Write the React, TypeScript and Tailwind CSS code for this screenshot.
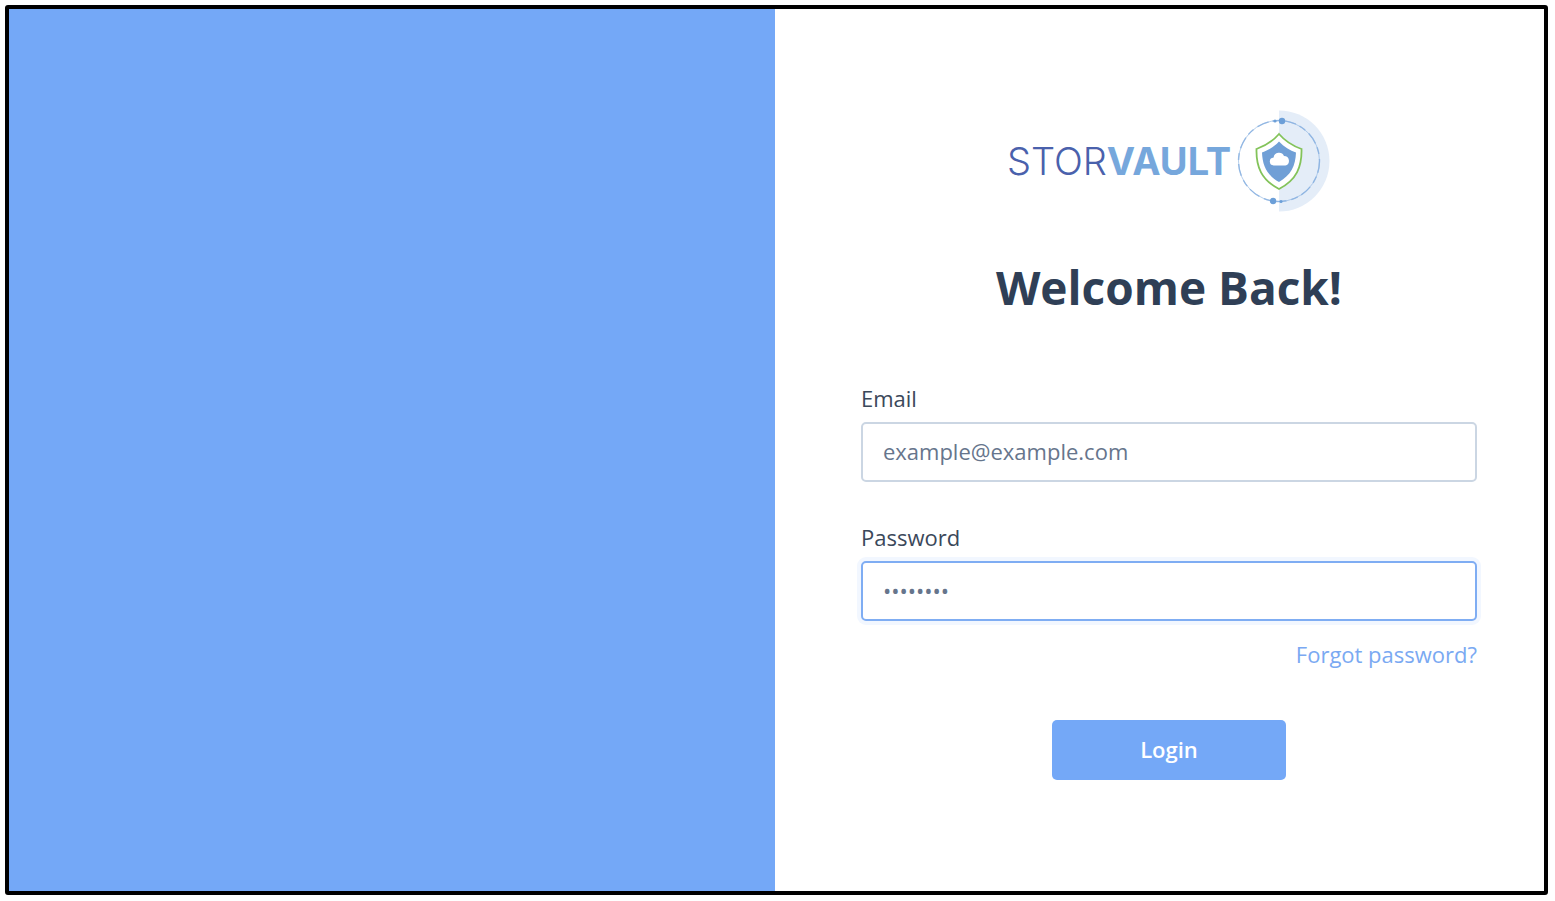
import { useState } from "react";

function Emblem() {
  return (
    <svg viewBox="0 0 94 104" className="h-[104px] w-[94px] shrink-0" aria-hidden="true">
      <path d="M42 1.5a50.5 50.5 0 0 1 0 101z" fill="#e4edf8" />
      <g fill="none" stroke="#86afe0">
        <circle cx="42" cy="52" r="40.5" strokeWidth="1" opacity=".6" />
        <circle cx="42" cy="52" r="40.5" strokeWidth="1.4" strokeDasharray="12 4 7 5" opacity=".8" />
      </g>
      <g fill="#6c9fd8">
        <circle cx="45" cy="12" r="3.2" />
        <circle cx="38" cy="12" r="1.6" />
        <circle cx="36" cy="92" r="3.2" />
        <circle cx="44" cy="92.5" r="1.6" />
      </g>
      <path
        d="M42 25C36 32 28 37 19.500 40c-.5 18 5 31 22.500 40C59.500 71 65 58 64.500 40 56 37 48 32 42 25z"
        fill="#fff"
        stroke="#83c35a"
        strokeWidth="1.8"
      />
      <path
        d="M42 32.500C37 38 31 41.500 25 43.500 25.500 57 30 66 42 73 54 66 58.500 57 59 43.500 53 41.500 47 38 42 32.500z"
        fill="#709fd6"
      />
      <path
        d="M37 56.500a4 4 0 0 1-.4-8 5.500 5.500 0 0 1 10.400-1.600 4.900 4.900 0 0 1 1.400 9.600z"
        fill="#fff"
      />
    </svg>
  );
}

const fieldClass =
  "h-15 w-full rounded-[5px] border-2 bg-white px-5 pb-0.5 text-[22px] text-[#66758c] outline-none";
const labelClass = "text-[22px] leading-[30px] text-[#3b485a]";

export default function App() {
  const [email, setEmail] = useState("example@example.com");
  const [password, setPassword] = useState("password");

  return (
    <div className="flex min-h-screen bg-white pt-[5px] pr-[7px] pb-[6px] pl-[5px] font-['Open_Sans',sans-serif]">
      <main className="flex flex-1 rounded-[3px] border-4 border-black">
        <div className="w-[49.9%] bg-[#74a8f7]" />
        <section className="flex flex-1 flex-col pt-[100px] pr-[67px] pl-[86px]">
          <div className="flex items-center justify-center">
            <div className="mr-1.5 font-['Inter',sans-serif] text-[38px] leading-none">
              <span className="font-light text-[#4a61ac]">STOR</span>
              <span className="font-bold text-[#76a7dc]">VAULT</span>
            </div>
            <Emblem />
          </div>
          <h1 className="mt-[42px] text-center text-[46px] leading-[64px] font-bold text-[#2f3f56]">
            Welcome Back!
          </h1>
          <form className="flex flex-col" onSubmit={(e) => e.preventDefault()}>
            <div className="mt-16 flex flex-col gap-[9px]">
              <label htmlFor="email" className={labelClass}>
                Email
              </label>
              <input
                id="email"
                type="email"
                value={email}
                onChange={(e) => setEmail(e.target.value)}
                className={`${fieldClass} border-[#cbd6e3]`}
              />
            </div>
            <div className="mt-10 flex flex-col gap-[9px]">
              <label htmlFor="password" className={labelClass}>
                Password
              </label>
              <input
                id="password"
                type="password"
                value={password}
                onChange={(e) => setPassword(e.target.value)}
                className={`${fieldClass} border-[#7fadf3] shadow-[0_0_0_4px_#f2f7ff]`}
              />
            </div>
            <a href="#forgot" className="mt-[18px] self-end text-[22px] leading-[30px] text-[#7aa9f2]">
              Forgot password?
            </a>
            <button
              type="submit"
              className="mt-[51px] h-15 w-[234px] self-center rounded-[5px] bg-[#74a8f7] pb-0.5 text-[22px] font-semibold text-white"
            >
              Login
            </button>
          </form>
        </section>
      </main>
    </div>
  );
}
